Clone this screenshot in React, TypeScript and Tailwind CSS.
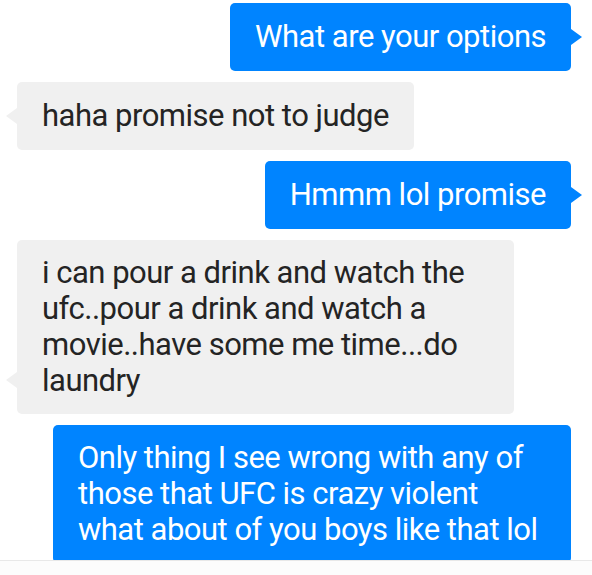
const font = { fontFamily: "Roboto, 'Noto Sans', sans-serif" };

type Msg = { from: "me" | "them"; lines: string[]; width?: string; tail?: boolean };

const messages: Msg[] = [
  { from: "me", lines: ["What are your options"], tail: true },
  { from: "them", lines: ["haha promise not to judge"], tail: true },
  { from: "me", lines: ["Hmmm lol promise"], tail: true },
  {
    from: "them",
    lines: [
      "i can pour a drink and watch the",
      "ufc..pour a drink and watch a",
      "movie..have some me time...do",
      "laundry",
    ],
    width: "w-[497px]",
    tail: true,
  },
  {
    from: "me",
    lines: [
      "Only thing I see wrong with any of",
      "those that UFC is crazy violent",
      "what about of you boys like that lol",
    ],
    width: "w-[518px]",
  },
];

function Bubble({ m }: { m: Msg }) {
  const mine = m.from === "me";
  const multi = m.lines.length > 1;
  return (
    <div className={mine ? "flex justify-end shrink-0" : "flex justify-start shrink-0"}>
      <div
        className={
          "relative rounded-[5px] px-[25px] text-[31px] leading-[36px] tracking-[-0.5px] whitespace-nowrap " +
          (multi ? "py-[15px] " : "py-4 ") +
          (mine ? "bg-[#0084ff] text-white " : "bg-[#f0f0f0] text-[#242424] ") +
          (m.width ?? "")
        }
      >
        {m.lines.map((l, i) => (
          <div key={i}>{l}</div>
        ))}
        {m.tail &&
          (mine ? (
            <span className="absolute right-[-11px] bottom-[26px] h-0 w-0 border-y-[8px] border-l-[11px] border-y-transparent border-l-[#0084ff]" />
          ) : (
            <span className="absolute left-[-11px] bottom-[26px] h-0 w-0 border-y-[8px] border-r-[11px] border-y-transparent border-r-[#f0f0f0]" />
          ))}
      </div>
    </div>
  );
}

export default function App() {
  return (
    <div className="h-[575px] w-[592px] bg-white flex flex-col overflow-hidden" style={font}>
      <div className="h-[560px] shrink-0 overflow-hidden pt-[3px] pl-[17px] pr-[21px] flex flex-col gap-[11px]">
        {messages.map((m, i) => (
          <Bubble key={i} m={m} />
        ))}
      </div>
      <div className="flex-1 border-t border-[#e8e8e8] bg-[#fcfcfc]" />
    </div>
  );
}
